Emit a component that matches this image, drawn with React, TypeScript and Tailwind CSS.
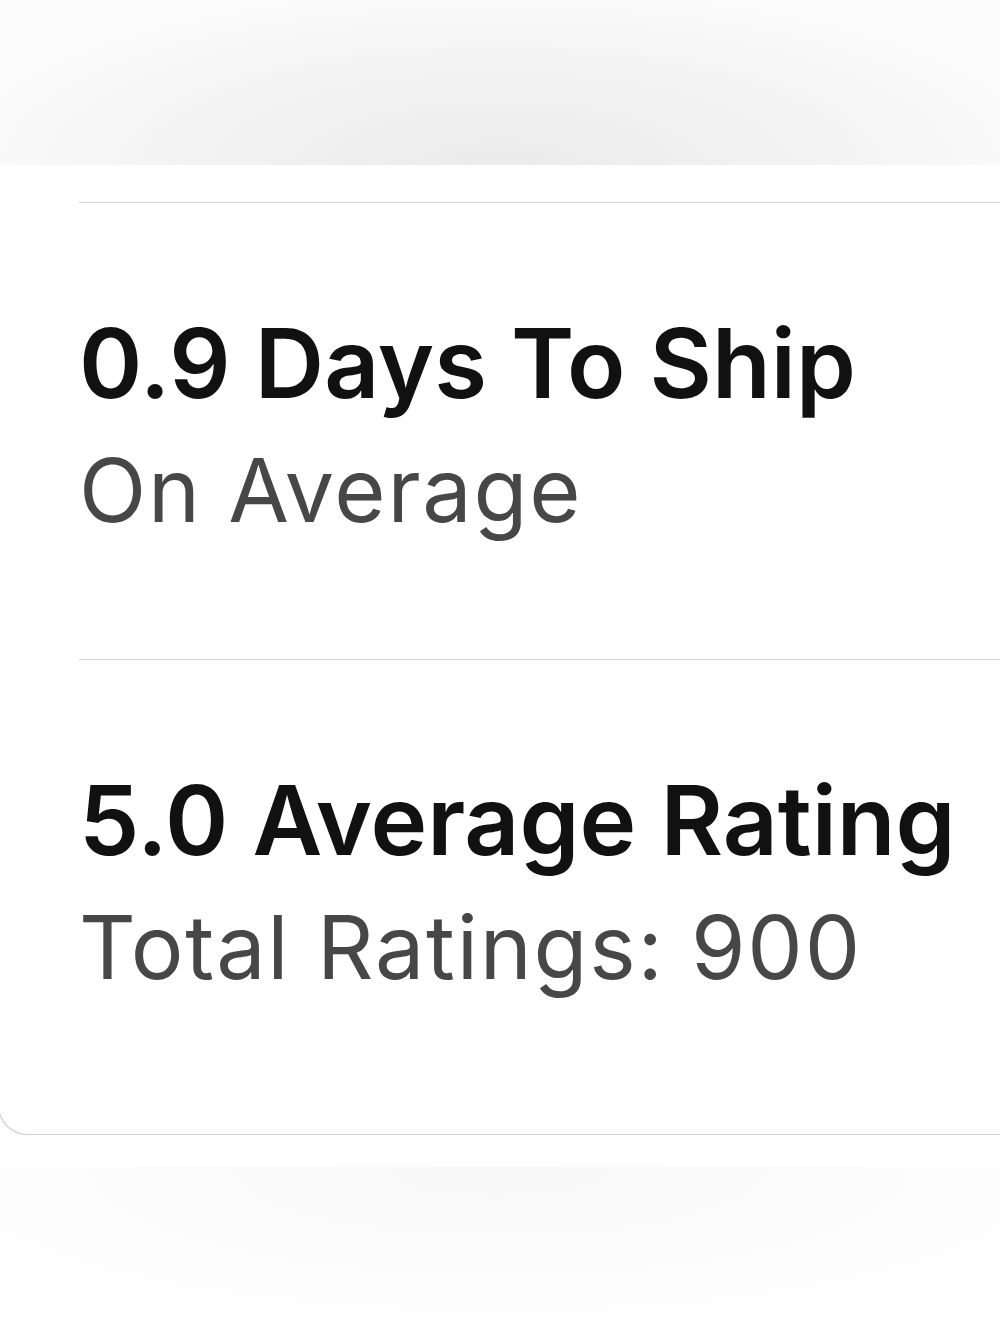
import React from 'react';

const stats = [
  { title: '0.9 Days To Ship', sub: 'On Average' },
  { title: '5.0 Average Rating', sub: 'Total Ratings: 900' },
];

export default function App() {
  return (
    <div
      className="w-[1000px] h-[1330px] overflow-hidden bg-white flex flex-col"
      style={{ fontFamily: 'Inter, "Noto Sans", sans-serif' }}
    >
      <div className="h-[165px] shrink-0 bg-[radial-gradient(ellipse_62%_120%_at_50%_100%,#ebebeb_0%,#f2f2f2_45%,#fcfcfc_95%)]" />
      <div className="-ml-[2px] w-[1040px] shrink-0 bg-white rounded-bl-[30px] border-b border-l border-[#cfcfcf] shadow-[0_2px_3px_rgba(0,0,0,0.06)] pt-[37px]">
        {stats.map((s, i) => (
          <div
            key={s.title}
            className={`ml-[80px] border-t border-[#d2d2d2] pt-[112px] ${i === 0 ? 'pb-[125px]' : 'pb-[143px]'}`}
          >
            <div className="text-[96px] leading-none font-semibold text-[#111111] whitespace-nowrap">
              {s.title}
            </div>
            <div className="mt-[35px] text-[88px] leading-none font-normal tracking-[0.02em] text-[#474747] whitespace-nowrap">
              {s.sub}
            </div>
          </div>
        ))}
      </div>
      <div className="h-[32px] shrink-0 bg-white" />
      <div className="flex-1 bg-[radial-gradient(ellipse_62%_100%_at_50%_0%,#f8f8f8_0%,#fbfbfb_50%,#fefefe_95%)]" />
    </div>
  );
}
